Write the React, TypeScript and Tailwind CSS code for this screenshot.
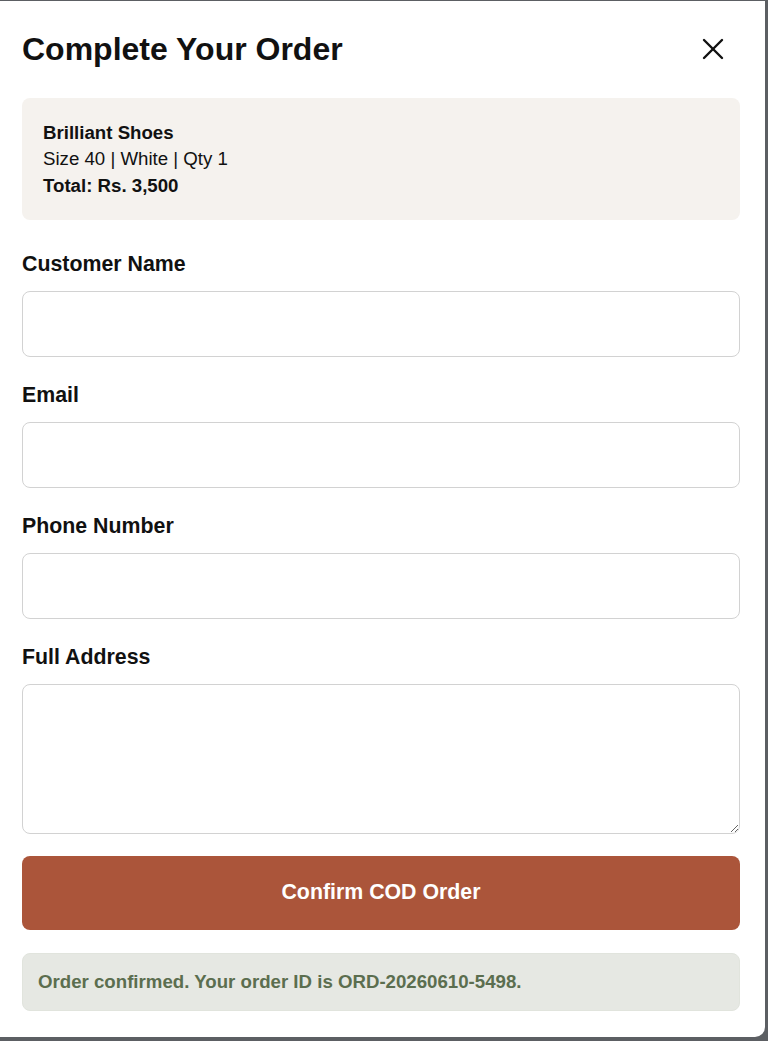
import { useState } from 'react'

const Field = ({ label, area }: { label: string; area?: boolean }) => {
  const [value, setValue] = useState('')
  return (
    <div className="flex flex-col">
      <label className="text-[21.33px] leading-[28px] font-bold text-[#111]">{label}</label>
      {area ? (
        <textarea
          value={value}
          onChange={e => setValue(e.target.value)}
          className="mt-[13px] h-[150px] w-full rounded-[8px] border border-[#d2d2d2] bg-white px-3 py-2 text-[18.67px] outline-none"
        />
      ) : (
        <input
          value={value}
          onChange={e => setValue(e.target.value)}
          className="mt-[13px] h-[66px] w-full rounded-[8px] border border-[#d2d2d2] bg-white px-3 text-[18.67px] outline-none"
        />
      )}
    </div>
  )
}

const App = () => {
  return (
    <div
      className="h-[1041px] w-[768px] overflow-hidden bg-[#5c5f63] pt-px"
      style={{ fontFamily: '"Liberation Sans", Arial, sans-serif' }}
    >
      <div className="flex h-[1036px] w-[765px] flex-col rounded-br-[10px] bg-white pl-[22px] pr-[25px] pt-[28px]">
        <div className="flex h-[40px] items-center justify-between">
          <h1 className="text-[32px] leading-[40px] font-bold text-[#111]">Complete Your Order</h1>
          <button className="mr-[11px] flex h-[32px] w-[32px] items-center justify-center text-[#111]">
            <svg width="22" height="22" viewBox="0 0 22 22" fill="none" stroke="currentColor" strokeWidth="2.4" strokeLinecap="round">
              <path d="M2 2 L20 20" />
              <path d="M20 2 L2 20" />
            </svg>
          </button>
        </div>

        <div className="mt-[29px] flex h-[122px] flex-col justify-center rounded-[8px] bg-[#f5f2ee] px-[21px] pt-px text-[18.67px] leading-[26.5px] text-[#111]">
          <p className="font-bold">Brilliant Shoes</p>
          <p>Size 40 | White | Qty 1</p>
          <p className="font-bold">Total: Rs. 3,500</p>
        </div>

        <div className="mt-[30px] flex flex-col gap-[24px]">
          <Field label="Customer Name" />
          <Field label="Email" />
          <Field label="Phone Number" />
          <Field label="Full Address" area />
        </div>

        <button className="mt-[22px] h-[74px] w-full rounded-[8px] bg-[#ab553a] text-[21.33px] font-bold text-white">
          Confirm COD Order
        </button>

        <div className="mt-[23px] flex h-[58px] items-center rounded-[8px] border border-[#e1e4dd] bg-[#e6e8e3] px-[15px] text-[18.67px] font-bold text-[#5b6e4f]">
          Order confirmed. Your order ID is ORD-20260610-5498.
        </div>
      </div>
    </div>
  )
}

export default App
